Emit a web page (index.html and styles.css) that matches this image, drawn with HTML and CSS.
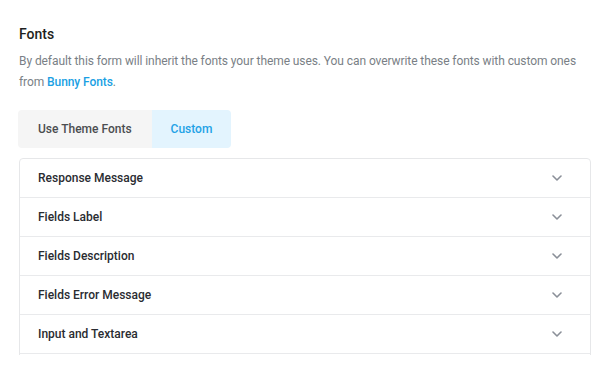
FILE: index.html
```html
<!DOCTYPE html>
<html>
<head>
<meta charset="utf-8">
<link rel="stylesheet" href="styles.css">
</head>
<body>
<div class="page">
  <h2 class="title">Fonts</h2>
  <p class="desc">By default this form will inherit the fonts your theme uses. You can overwrite these fonts with custom ones from <a class="link" href="#">Bunny Fonts</a>.</p>
  <div class="tabs">
    <div class="tab">Use Theme Fonts</div>
    <div class="tab active">Custom</div>
  </div>
  <div class="card-clip">
    <div class="card">
      <div class="row"><span>Response Message</span><svg class="chev" width="10" height="6" viewBox="0 0 10 6"><path d="M1 1l4 4 4-4" fill="none" stroke="#8a8f98" stroke-width="1.6" stroke-linecap="round" stroke-linejoin="round"/></svg></div>
      <div class="row"><span>Fields Label</span><svg class="chev" width="10" height="6" viewBox="0 0 10 6"><path d="M1 1l4 4 4-4" fill="none" stroke="#8a8f98" stroke-width="1.6" stroke-linecap="round" stroke-linejoin="round"/></svg></div>
      <div class="row"><span>Fields Description</span><svg class="chev" width="10" height="6" viewBox="0 0 10 6"><path d="M1 1l4 4 4-4" fill="none" stroke="#8a8f98" stroke-width="1.6" stroke-linecap="round" stroke-linejoin="round"/></svg></div>
      <div class="row"><span>Fields Error Message</span><svg class="chev" width="10" height="6" viewBox="0 0 10 6"><path d="M1 1l4 4 4-4" fill="none" stroke="#8a8f98" stroke-width="1.6" stroke-linecap="round" stroke-linejoin="round"/></svg></div>
      <div class="row"><span>Input and Textarea</span><svg class="chev" width="10" height="6" viewBox="0 0 10 6"><path d="M1 1l4 4 4-4" fill="none" stroke="#8a8f98" stroke-width="1.6" stroke-linecap="round" stroke-linejoin="round"/></svg></div>
    </div>
  </div>
</div>
</body>
</html>
```
FILE: styles.css
```css
html, body {
  margin: 0;
  padding: 0;
  background: #ffffff;
}
body {
  font-family: Roboto, "Liberation Sans", sans-serif;
  color: #1e1f21;
}
.page {
  padding: 23px 19px 0 18px;
}
.title {
  margin: 0 0 0 1px;
  font-size: 14px;
  font-weight: 500;
  line-height: 22px;
  color: #1e1f21;
}
.desc {
  margin: 6px 0 0 1px;
  font-size: 12px;
  line-height: 21px;
  letter-spacing: -0.08px;
  color: #7a7f86;
}
.link {
  color: #1a9fe3;
  text-decoration: none;
  font-weight: 500;
}
.tabs {
  display: flex;
  margin-top: 17px;
  width: max-content;
  border-radius: 4px;
  overflow: hidden;
}
.tab {
  height: 38px;
  display: flex;
  align-items: center;
  padding: 0 20px;
  font-size: 12px;
  font-weight: 500;
  color: #4b4d50;
  background: #f5f5f5;
}
.tab.active {
  background: #e3f4fe;
  color: #1fa2e6;
  padding: 0 19px;
}
.card-clip {
  margin-top: 10px;
  margin-left: 1px;
  height: 197px;
  overflow: hidden;
}
.card {
  border: 1px solid #e6e7e9;
  border-radius: 4px;
  padding-bottom: 20px;
}
.row {
  height: 38px;
  display: flex;
  align-items: center;
  justify-content: space-between;
  padding: 0 28px 0 18px;
  border-bottom: 1px solid #e9eaec;
  font-size: 12px;
  font-weight: 500;
  color: #2a2c31;
}
.chev {
  display: block;
}
```
